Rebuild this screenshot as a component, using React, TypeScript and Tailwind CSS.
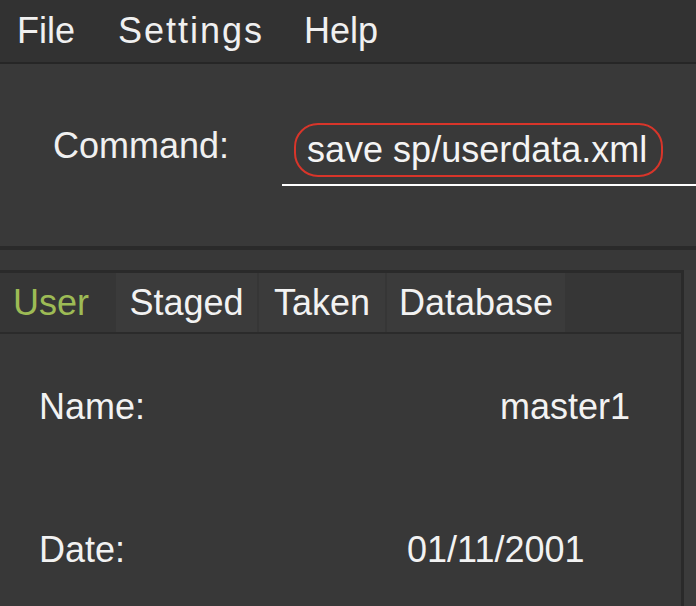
import React from "react";

const font = { fontFamily: '"Liberation Sans", Arial, sans-serif' };

function MenuBar() {
  return (
    <div className="flex h-[62px] items-center bg-[#323232] pl-[17px] text-[36px] leading-[36px] text-[#f0f0f0]">
      <span>File</span>
      <span className="ml-[43px] tracking-[2px]">Settings</span>
      <span className="ml-[40px]">Help</span>
    </div>
  );
}

function CommandBox() {
  return (
    <div className="flex h-[182px] items-start bg-[#393939]">
      <span className="ml-[53px] mt-[64px] text-[36px] leading-[36px] text-[#f0f0f0]">
        Command:
      </span>
      <div className="ml-[53px] mt-[59px] flex-1 border-b-2 border-white pb-[7px]">
        <div className="ml-[12px] flex h-[54px] w-[369px] items-center rounded-[24px] border-2 border-[#d8352a] pl-[11px] text-[36px] leading-[36px] text-[#f4f4f4]">
          save sp/userdata.xml
        </div>
      </div>
    </div>
  );
}

const tabs = [
  { label: "User", width: "w-[114px]" },
  { label: "Staged", width: "w-[141px]" },
  { label: "Taken", width: "w-[126px]" },
  { label: "Database", width: "w-[178px]" },
];

function TabPane() {
  return (
    <div className="flex">
      <div className="w-[684px] border-r-[3px] border-t-[3px] border-[#2a2a2a]">
        <div className="flex h-[61px] gap-[2px] border-b-2 border-[#2b2b2b] bg-[#363636]">
          {tabs.map((t, i) => (
            <div
              key={t.label}
              className={
                i === 0
                  ? `flex items-center pl-[13px] text-[36px] leading-[36px] text-[#9dbb55] ${t.width}`
                  : `flex items-center justify-center bg-[#3b3b3b] text-[36px] leading-[36px] text-[#f2f2f2] ${t.width}`
              }
            >
              {t.label}
            </div>
          ))}
        </div>
        <div className="h-[272px] bg-[#383838] pt-[55px] text-[36px] leading-[36px] text-[#f2f2f2]">
          <div className="flex pl-[39px]">
            <span className="w-[461px]">Name:</span>
            <span>master1</span>
          </div>
          <div className="mt-[107px] flex pl-[39px]">
            <span className="w-[368px]">Date:</span>
            <span>01/11/2001</span>
          </div>
        </div>
      </div>
      <div className="flex-1 bg-[#3b3b3b]" />
    </div>
  );
}

export default function App() {
  return (
    <div className="h-[606px] w-[696px] overflow-hidden bg-[#383838]" style={font}>
      <MenuBar />
      <div className="h-[2px] bg-[#262626]" />
      <CommandBox />
      <div className="h-[4px] bg-[#2a2a2a]" />
      <div className="h-[20px] bg-[#383838]" />
      <TabPane />
    </div>
  );
}
